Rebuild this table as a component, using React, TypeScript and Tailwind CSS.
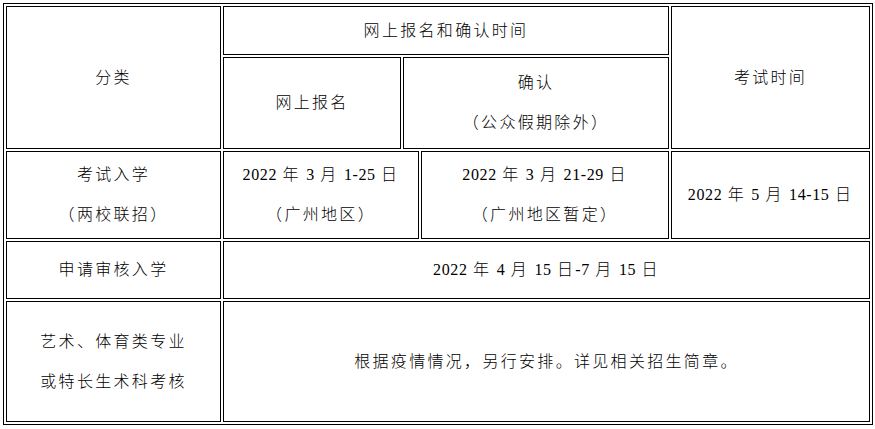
import React from "react";

const isWide = (ch: string) => /[\u3000-\u9fff\uff00-\uffef]/.test(ch);

// Chinese glyphs are spaced wider than the Latin digits in the source document
const Txt = ({ t }: { t: string }) => (
  <>
    {[...t].map((ch, i) => (
      <span
        key={i}
        className={ch === " " ? "tracking-[1.4px]" : isWide(ch) ? "tracking-[2.3px] font-light" : "tracking-[0.6px]"}
      >
        {ch}
      </span>
    ))}
  </>
);

const Cell = ({ className, lines }: { className: string; lines: string[] }) => (
  <div className={`border border-black flex flex-col items-center justify-center text-center ${className}`}>
    {lines.map((l, i) => (
      <div key={i} className="whitespace-pre">
        <Txt t={l} />
      </div>
    ))}
  </div>
);

const App = () => {
  return (
    <div className="bg-white w-[875px] h-[429px] pt-[3px] pl-[3px]">
      <div className="w-[870px] border border-black p-[2px] text-black text-[16px] leading-[40px] font-['Liberation_Serif','Noto_Sans_CJK_SC',serif]">
        <div className="grid grid-cols-[215px_178px_16px_248px_199px] grid-rows-[49px_92px_88px_58px_121px] gap-[2px]">
          <Cell className="col-start-1 row-start-1 row-span-2" lines={["分类"]} />
          <Cell className="col-start-2 col-span-3 row-start-1" lines={["网上报名和确认时间"]} />
          <Cell className="col-start-5 row-start-1 row-span-2" lines={["考试时间"]} />
          <Cell className="col-start-2 row-start-2" lines={["网上报名"]} />
          <Cell className="col-start-3 col-span-2 row-start-2" lines={["确认", "（公众假期除外）"]} />

          <Cell className="col-start-1 row-start-3" lines={["考试入学", "（两校联招）"]} />
          <Cell className="col-start-2 col-span-2 row-start-3" lines={["2022 年 3 月 1-25 日", "（广州地区）"]} />
          <Cell className="col-start-4 row-start-3" lines={["2022 年 3 月 21-29 日", "（广州地区暂定）"]} />
          <Cell className="col-start-5 row-start-3" lines={["2022 年 5 月 14-15 日"]} />

          <Cell className="col-start-1 row-start-4" lines={["申请审核入学"]} />
          <Cell className="col-start-2 col-span-4 row-start-4" lines={["2022 年 4 月 15 日-7 月 15 日"]} />

          <Cell className="col-start-1 row-start-5" lines={["艺术、体育类专业", "或特长生术科考核"]} />
          <Cell className="col-start-2 col-span-4 row-start-5" lines={["根据疫情情况，另行安排。详见相关招生简章。"]} />
        </div>
      </div>
    </div>
  );
};

export default App;
